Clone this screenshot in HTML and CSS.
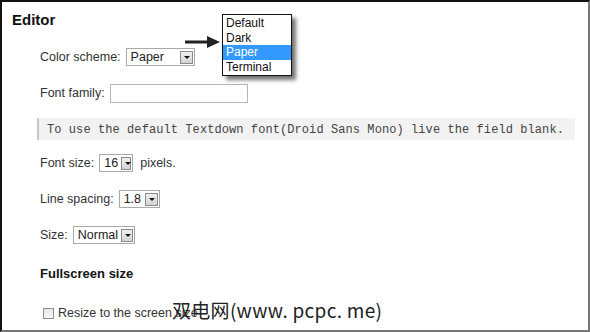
FILE: index.html
```html
<!DOCTYPE html>
<html lang="en">
  <head>
    <meta charset="UTF-8" />
    <title>Editor settings</title>
    <link rel="stylesheet" href="styles.css">
  </head>
  <body>
    <div class="frame">
      <h2 class="title">Editor</h2>

      <div class="row row-scheme">
        <span class="label">Color scheme:</span>
        <span class="select sel-scheme"><span class="value">Paper</span><span class="btn"></span></span>
      </div>

      <div class="row">
        <span class="label">Font family:</span>
        <span class="input"></span>
      </div>

      <div class="note">To use the default Textdown font(Droid Sans Mono) live the field blank.</div>

      <div class="row">
        <span class="label">Font size:</span>
        <span class="select sel-size"><span class="value">16</span><span class="btn"></span></span>
        <span class="unit">pixels.</span>
      </div>

      <div class="row">
        <span class="label">Line spacing:</span>
        <span class="select sel-spacing"><span class="value">1.8</span><span class="btn"></span></span>
      </div>

      <div class="row">
        <span class="label">Size:</span>
        <span class="select sel-mode"><span class="value">Normal</span><span class="btn"></span></span>
      </div>

      <h3 class="subtitle">Fullscreen size</h3>

      <div class="row row-check">
        <span class="checkbox"></span>
        <span class="label">Resize to the screen size</span>
      </div>

      <!-- open dropdown of the color scheme select -->
      <div class="arrow">
        <svg width="36" height="12" viewBox="0 0 36 12">
          <rect x="0" y="4.5" width="24" height="3" fill="#222" />
          <polygon points="22,0 35,6 22,12" fill="#222" />
        </svg>
      </div>
      <ul class="menu">
        <li>Default</li>
        <li>Dark</li>
        <li class="active">Paper</li>
        <li>Terminal</li>
      </ul>

      <div class="watermark">双电网(www. pcpc. me)</div>
    </div>
  </body>
</html>
```

FILE: styles.css
```css
html,
body {
  margin: 0;
  padding: 0;
  background: #fff;
}
body {
  font-family: "Liberation Sans", Arial, sans-serif;
  color: #333;
}
.frame {
  position: relative;
  width: 590px;
  height: 332px;
  box-sizing: border-box;
  border-top: 2px solid #111;
  border-left: 2px solid #111;
  border-right: 2px solid #777;
  border-bottom: 2px solid #777;
  padding: 0 0 0 38px;
  overflow: hidden;
}
.title {
  margin: 9px 0 0 -28px;
  font-size: 15px;
  line-height: 17px;
  font-weight: bold;
  color: #111;
}
.row {
  display: flex;
  align-items: center;
  height: 18px;
  margin-bottom: 18px;
  font-size: 12.5px;
}
.row-scheme {
  margin-top: 20px;
}
.label {
  margin-right: 5px;
}
.select {
  display: flex;
  align-items: center;
  height: 18px;
  box-sizing: border-box;
  border: 1px solid #a9a9a9;
  background: #fff;
  color: #222;
  padding: 0 1px 0 4px;
}
.select .value {
  flex: 1;
}
.select .btn {
  position: relative;
  width: 13px;
  height: 13px;
  box-sizing: border-box;
  border: 1px solid #8a8a8a;
  background: linear-gradient(#f0f0f0, #d4d4d4);
  margin-left: 3px;
}
.select .btn::after {
  content: "";
  position: absolute;
  left: 3px;
  top: 4px;
  border-left: 3px solid transparent;
  border-right: 3px solid transparent;
  border-top: 3px solid #111;
}
.sel-scheme {
  width: 69px;
}
.sel-size {
  width: 34px;
}
.sel-spacing {
  width: 41px;
}
.sel-mode {
  width: 62px;
}
.unit {
  margin-left: 7px;
}
.input {
  width: 138px;
  height: 19px;
  box-sizing: border-box;
  border: 1px solid #b5b5b5;
}
.note {
  width: 538px;
  height: 22px;
  margin: -2px 0 14px -3px;
  box-sizing: border-box;
  padding: 5px 0 0 8px;
  background: #f2f2f2;
  border-left: 2px solid #c8c8c8;
  font-family: "Liberation Mono", "Courier New", monospace;
  font-size: 12px;
  letter-spacing: 0.08px;
  color: #444;
}
.subtitle {
  margin: 22px 0 0 0;
  font-size: 13px;
  line-height: 16px;
  font-weight: bold;
  color: #111;
}
.row-check {
  margin-top: 22px;
  padding-left: 3px;
}
.checkbox {
  width: 11px;
  height: 11px;
  box-sizing: border-box;
  border: 1px solid #8e8e8e;
  background: linear-gradient(#e6e6e6, #f8f8f8);
  margin-right: 4px;
}
.arrow {
  position: absolute;
  left: 183px;
  top: 34px;
}
.arrow svg {
  display: block;
}
.menu {
  position: absolute;
  left: 220px;
  top: 12px;
  width: 68px;
  margin: 0;
  padding: 1px 0;
  list-style: none;
  background: #fff;
  border: 1px solid #111;
  box-shadow: 4px 4px 4px rgba(0, 0, 0, 0.55);
  font-size: 12px;
  color: #111;
}
.menu li {
  height: 14.5px;
  line-height: 14.5px;
  padding-left: 3px;
}
.menu li.active {
  background: #3399ff;
  color: #fff;
}
.watermark {
  position: absolute;
  left: 170px;
  top: 294px;
  font-family: "Noto Sans CJK SC", "DejaVu Sans", sans-serif;
  font-size: 19px;
  letter-spacing: 0.3px;
  color: #222;
  white-space: nowrap;
}
```
